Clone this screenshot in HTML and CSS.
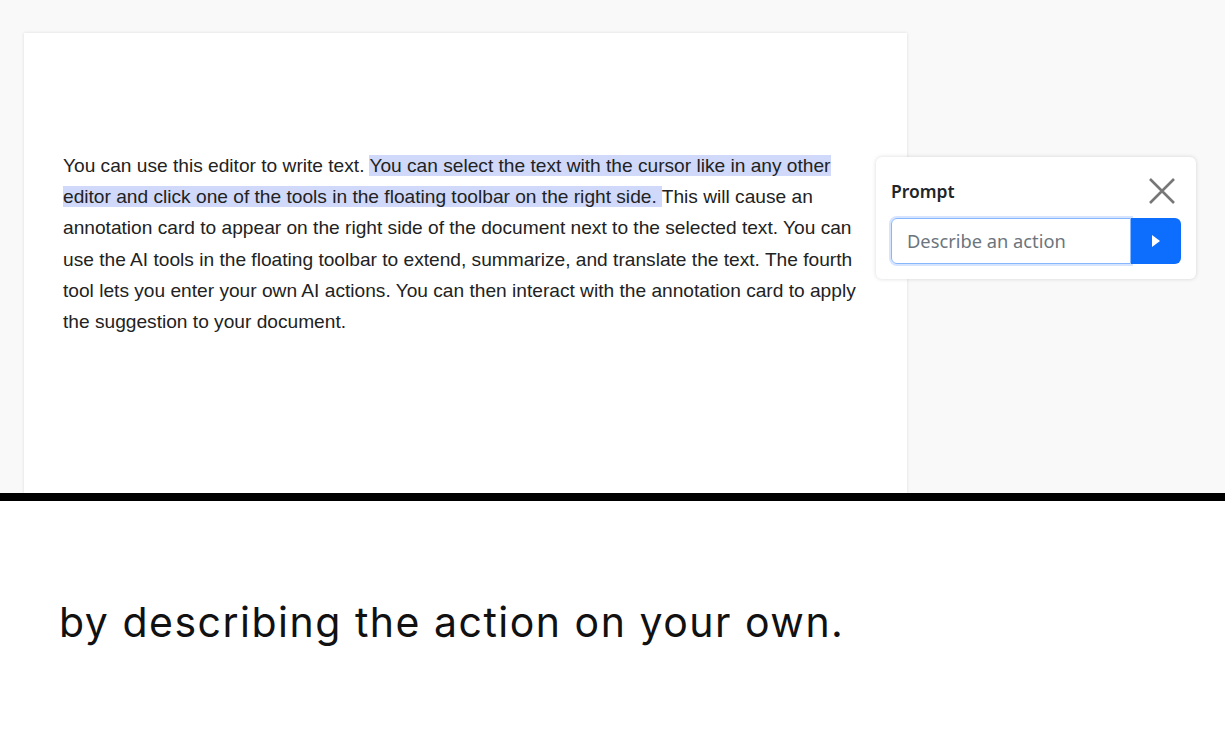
FILE: index.html
```html
<!DOCTYPE html>
<html>
<head>
<meta charset="utf-8">
<link rel="stylesheet" href="styles.css">
</head>
<body>
<div class="stage">
  <div class="doc">
    <p class="doc-text">You can use this editor to write text. <span class="sel">You can select the text with the cursor like in any other editor and click one of the tools in the floating toolbar on the right side. </span>This will cause an annotation card to appear on the right side of the document next to the selected text. You can use the AI tools in the floating toolbar to extend, summarize, and translate the text. The fourth tool lets you enter your own AI actions. You can then interact with the annotation card to apply the suggestion to your document.</p>
  </div>
  <div class="side">
    <div class="card">
      <div class="card-head">
        <span class="card-title">Prompt</span>
        <svg class="close" width="28" height="28" viewBox="0 0 28 28"><path d="M2 2 L26 26 M26 2 L2 26" stroke="#777" stroke-width="2.6" fill="none"/></svg>
      </div>
      <div class="field">
        <div class="input">Describe an action</div>
        <div class="go"><svg width="10" height="14" viewBox="0 0 10 14"><path d="M1 1 L9 7 L1 13 Z" fill="#fff"/></svg></div>
      </div>
    </div>
  </div>
</div>
<div class="divider"></div>
<div class="caption">by describing the action on your own.</div>
</body>
</html>
```
FILE: styles.css
```css
html, body { margin: 0; padding: 0; }
body { width: 1225px; height: 750px; overflow: hidden; background: #fff; }
.stage {
  height: 493px;
  background: #f9f9f9;
  display: flex;
  padding: 33px 0 0 24px;
  box-sizing: border-box;
  overflow: hidden;
}
.doc {
  width: 883px;
  flex: none;
  background: #fff;
  box-shadow: 0 0 3px rgba(0,0,0,0.12);
  padding: 117px 39px 0 39px;
  box-sizing: border-box;
  height: 600px;
}
.doc-text {
  margin: 0;
  font-family: "Liberation Sans", Arial, sans-serif;
  font-size: 19.15px;
  line-height: 31.2px;
  color: #222;
}
.sel { background: #d0d9fa; }
.side { margin-left: -31px; padding-top: 124px; }
.card {
  width: 320px;
  height: 122px;
  box-sizing: border-box;
  background: #fff;
  border-radius: 6px;
  box-shadow: 0 0 4px rgba(0,0,0,0.15);
  padding: 21px 15px 0 15px;
}
.card-head { display: flex; justify-content: space-between; align-items: center; height: 26px; padding-right: 5px; }
.card-title { font-family: "Noto Sans", sans-serif; font-weight: 600; font-size: 17.5px; color: #212529; }
.close { display: block; }
.field { display: flex; margin-top: 14px; height: 46px; }
.input {
  width: 240px;
  box-sizing: border-box;
  border: 1px solid #86b7fe;
  box-shadow: 0 0 0 2px #d6e4fd;
  border-radius: 6px 0 0 6px;
  padding-left: 15px;
  padding-bottom: 2px;
  display: flex; align-items: center;
  font-family: "Noto Sans", sans-serif;
  font-size: 18.3px;
  color: #6c757d;
}
.go {
  width: 50px;
  background: #0d6efd;
  border-radius: 0 6px 6px 0;
  display: flex; align-items: center; justify-content: center;
}
.divider { height: 8px; background: #000; }
.caption {
  padding: 96px 0 0 59px;
  font-family: "Inter", sans-serif;
  font-weight: 400;
  font-size: 41px;
  letter-spacing: 1.5px;
  color: #111;
}
```
